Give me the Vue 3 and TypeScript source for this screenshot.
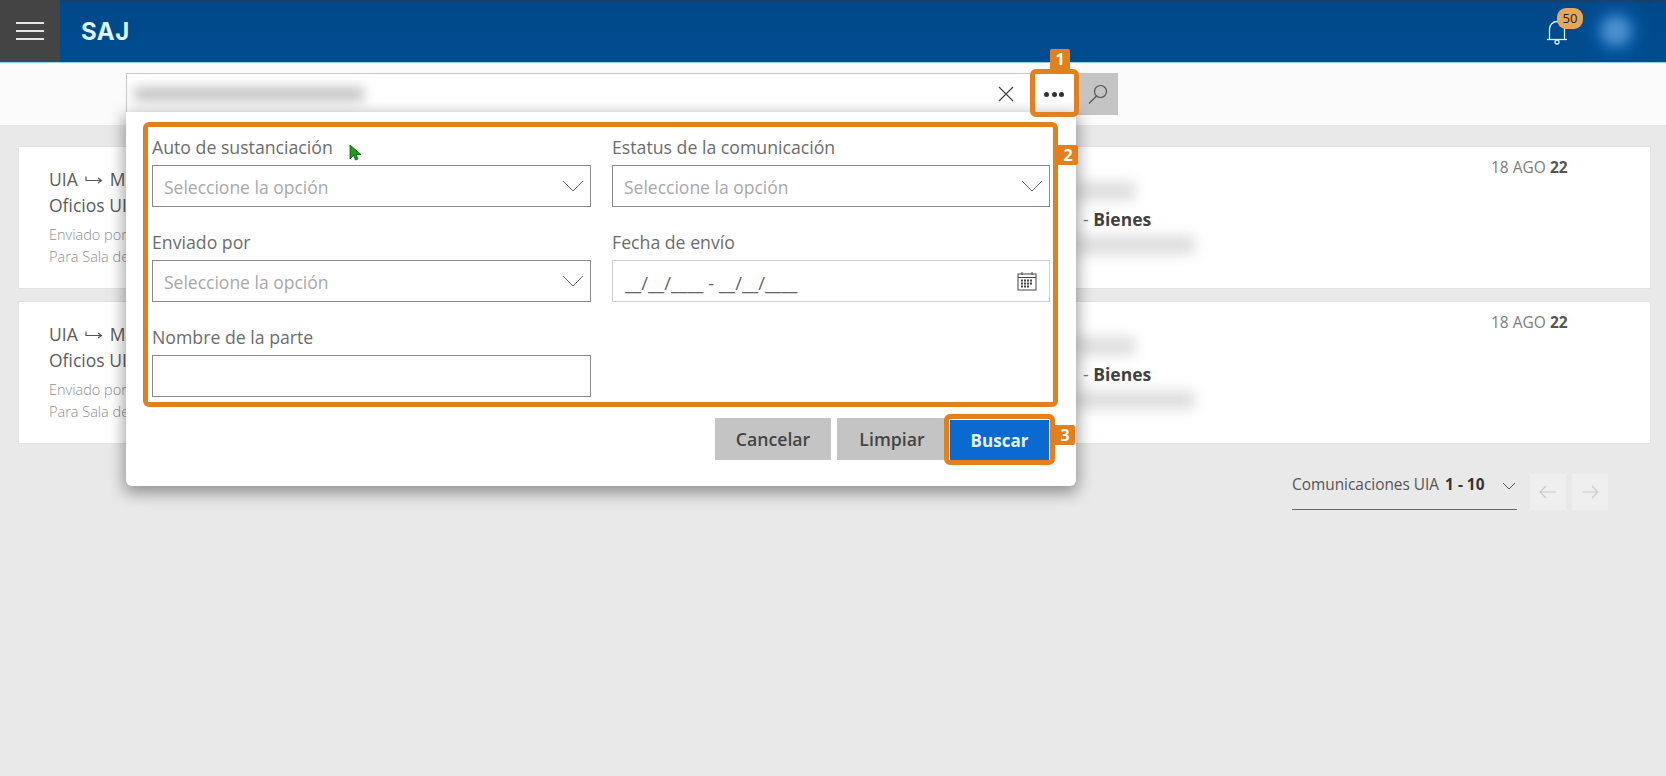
<script setup lang="ts">
interface Card { id: number }
const cards: Card[] = [{ id: 1 }, { id: 2 }]
</script>

<template>
  <div class="page">
    <header class="topbar">
      <button class="menu" aria-label="Menú"><span></span><span></span><span></span></button>
      <div class="logo">SAJ</div>
      <div class="top-right">
        <div class="bell">
          <svg width="22" height="26" viewBox="0 0 22 26" fill="none" stroke="#d8f0fb" stroke-width="1.3">
            <path d="M3.5 20.5V10a7.5 7.5 0 0 1 15 0v10.500" />
            <path d="M1 20.500h20" />
            <circle cx="11" cy="23" r="2" />
          </svg>
          <span class="badge">50</span>
        </div>
        <div class="avatar"></div>
      </div>
    </header>

    <div class="subbar">
      <div class="search">
        <div class="blur-text"></div>
        <svg class="clear" width="16" height="16" viewBox="0 0 16 16" stroke="#444" stroke-width="1.2"><path d="M1 1l14 14M15 1L1 15" /></svg>
      </div>
      <div class="more"><i></i><i></i><i></i></div>
      <div class="go">
        <svg width="22" height="22" viewBox="0 0 22 22" fill="none" stroke="#555" stroke-width="1.2">
          <circle cx="13.500" cy="8.500" r="6" />
          <path d="M9.500 13L2 20.500" />
        </svg>
      </div>
    </div>

    <main class="content">
      <article v-for="c in cards" :key="c.id" class="card">
        <div class="c-left">
          <div class="c-title">
            UIA
            <svg width="18" height="10" viewBox="0 0 18 10" fill="none" stroke="#555" stroke-width="1.200"><path d="M1 1.500V5.500h15M13 3l3.500 2.500L13 8" /></svg>
            Mesa
          </div>
          <div class="c-title">Oficios UIA</div>
          <div class="c-sub c-sub1">Enviado por</div>
          <div class="c-sub">Para Sala de</div>
        </div>
        <div class="c-mid">
          <div class="blob blob-a"></div>
          <div class="c-bienes"><span class="dash">-</span> <b>Bienes</b></div>
          <div class="blob blob-b"></div>
        </div>
        <div class="c-date">18 AGO <b>22</b></div>
      </article>

      <div class="pager">
        <div class="pager-select">
          <span>Comunicaciones UIA <b>1 - 10</b></span>
          <svg width="14" height="8" viewBox="0 0 14 8" fill="none" stroke="#555" stroke-width="1"><path d="M1 1l6 6 6-6" /></svg>
        </div>
        <div class="nav">
          <svg width="18" height="14" viewBox="0 0 18 14" fill="none" stroke="#c9c9c9" stroke-width="1.100"><path d="M17 7H1M7 1L1 7l6 6" /></svg>
        </div>
        <div class="nav">
          <svg width="18" height="14" viewBox="0 0 18 14" fill="none" stroke="#c9c9c9" stroke-width="1.100"><path d="M1 7h16M11 1l6 6-6 6" /></svg>
        </div>
      </div>
    </main>

    <section class="panel">
      <div class="form">
        <div class="field">
          <label>Auto de sustanciación</label>
          <div class="select">
            <span>Seleccione la opción</span>
            <svg width="22" height="12" viewBox="0 0 22 12" fill="none" stroke="#666" stroke-width="1"><path d="M1 1l10 10L21 1" /></svg>
          </div>
        </div>
        <div class="field">
          <label>Estatus de la comunicación</label>
          <div class="select">
            <span>Seleccione la opción</span>
            <svg width="22" height="12" viewBox="0 0 22 12" fill="none" stroke="#666" stroke-width="1"><path d="M1 1l10 10L21 1" /></svg>
          </div>
        </div>
        <div class="field">
          <label>Enviado por</label>
          <div class="select">
            <span>Seleccione la opción</span>
            <svg width="22" height="12" viewBox="0 0 22 12" fill="none" stroke="#666" stroke-width="1"><path d="M1 1l10 10L21 1" /></svg>
          </div>
        </div>
        <div class="field">
          <label>Fecha de envío</label>
          <div class="select date">
            <span>__/__/____ - __/__/____</span>
            <svg width="20" height="20" viewBox="0 0 20 20" fill="none" stroke="#444">
              <rect x="1" y="3" width="18" height="16" />
              <path d="M1 6.500h18M5 1v3M15 1v3" />
              <path d="M4 9.500h12M4 12.500h12M4 15.500h9" stroke-width="2" stroke-dasharray="2 1" />
            </svg>
          </div>
        </div>
        <div class="field">
          <label>Nombre de la parte</label>
          <div class="select"></div>
        </div>
      </div>
      <div class="actions">
        <button class="btn">Cancelar</button>
        <button class="btn limpiar">Limpiar</button>
        <button class="btn primary">Buscar</button>
      </div>
    </section>

    <!-- Anotaciones sobre la captura -->
    <div class="mark m1"></div>
    <div class="tag t1">1</div>
    <div class="mark m2"></div>
    <div class="tag t2">2</div>
    <div class="mark m3"></div>
    <div class="tag t3">3</div>

    <svg class="cursor" width="13" height="17" viewBox="0 0 13 17">
      <path d="M1 1v14l3.500-3.500 2 4.500 2.500-1-2-4.500h5z" fill="#1f9a1f" stroke="#0d5c0d" stroke-width="0.800" />
    </svg>
  </div>
</template>

<style>
html, body { margin: 0; }
</style>

<style scoped>
.page {
  position: relative;
  width: 1666px;
  height: 776px;
  overflow: hidden;
  background: #e9e9e9;
  font-family: "Open Sans", "Liberation Sans", sans-serif;
  color: #555;
}

.topbar {
  display: flex;
  align-items: stretch;
  height: 62px;
  box-sizing: content-box;
  overflow: hidden;
  background: linear-gradient(#1d3d63 0, #00498a 4px, #004c8f 100%);
  border-bottom: 1px solid #8fd0ea;
}
.menu {
  display: flex;
  flex-direction: column;
  justify-content: center;
  align-items: center;
  gap: 6px;
  width: 60px;
  padding: 0;
  border: 0;
  background: #444;
}
.menu span { display: block; width: 28px; height: 2px; background: #e4e4e4; }
.logo {
  margin-left: 21px;
  align-self: center;
  font-family: Inter, "Open Sans", sans-serif;
  font-weight: 700;
  font-size: 24px;
  letter-spacing: 0.5px;
  color: #dff3fb;
}
.top-right { display: flex; align-items: center; margin-left: auto; padding-right: 35px; }
.bell { position: relative; display: flex; margin-right: 33px; margin-top: 2px; }
.badge {
  position: absolute;
  left: 11px;
  top: -11px;
  width: 26px;
  height: 21px;
  border-radius: 9px;
  background: #e6a95c;
  color: #222;
  font-size: 13px;
  line-height: 21px;
  text-align: center;
}
.avatar {
  width: 30px;
  height: 30px;
  border-radius: 50%;
  background: #4a8fcf;
  box-shadow: 0 0 14px 8px #0a5fae;
  filter: blur(6px);
}

.subbar {
  display: flex;
  align-items: flex-start;
  height: 52px;
  padding: 10px 0 0 126px;
  background: #fbfbfb;
}
.search {
  display: flex;
  align-items: center;
  justify-content: space-between;
  box-sizing: border-box;
  width: 908px;
  height: 42px;
  padding: 0 20px 0 7px;
  background: #fff;
  border: 1px solid #c8c8c8;
  border-right: 0;
}
.blur-text {
  width: 230px;
  height: 14px;
  background: #c4c4c4;
  filter: blur(6px);
}
.more {
  display: flex;
  align-items: center;
  justify-content: center;
  gap: 2.500px;
  width: 40px;
  height: 42px;
  background: #fff;
}
.more i { width: 5px; height: 5px; border-radius: 50%; background: #333; }
.go {
  display: flex;
  align-items: center;
  justify-content: center;
  width: 44px;
  height: 42px;
  padding-left: 4px;
  box-sizing: border-box;
  background: #c4c4c4;
}

.content {
  display: flex;
  flex-direction: column;
  gap: 12px;
  padding: 21px 15px 0 18px;
}
.card {
  display: flex;
  box-sizing: border-box;
  height: 143px;
  background: #fff;
  border: 1px solid #e2e2e2;
}
.c-left { width: 1056px; padding: 20px 0 0 30px; box-sizing: border-box; }
.c-title { display: flex; align-items: center; gap: 7px; font-size: 17.500px; line-height: 25.500px; color: #5c5c5c; }
.c-sub { font-size: 14.500px; line-height: 22px; color: #8f8f8f; font-weight: 300; }
.c-sub1 { margin-top: 6px; }
.c-mid { width: 416px; padding-top: 35px; }
.blob { height: 18px; background: #dcdcdc; filter: blur(7px); }
.blob-a { width: 60px; }
.blob-b { width: 120px; }
.c-bienes { margin: 7px 0 5px 8px; font-size: 17.500px; line-height: 24px; color: #3f3f3f; }
.c-bienes b { font-weight: 700; }
.dash { color: #777; }
.c-date { padding-top: 9px; font-size: 15.500px; line-height: 22px; color: #7c7c7c; }
.c-date b { color: #555; font-weight: 700; }

.pager {
  display: flex;
  justify-content: flex-end;
  align-items: flex-start;
  margin-top: 18px;
  padding-right: 43px;
}
.pager-select {
  display: flex;
  justify-content: space-between;
  align-items: flex-start;
  box-sizing: border-box;
  width: 225px;
  height: 36px;
  margin-right: 13px;
  border-bottom: 1px solid #666;
  font-size: 15.400px;
  line-height: 22px;
  color: #555;
}
.pager-select b { margin-left: 2px; color: #333; }
.pager-select svg { margin: 8px 1px 0 0; }
.nav {
  display: flex;
  align-items: center;
  justify-content: center;
  width: 36px;
  height: 36px;
  margin-right: 6px;
  background: #efefef;
}
.nav:last-child { margin-right: 0; }

.panel {
  position: absolute;
  left: 126px;
  top: 112px;
  box-sizing: border-box;
  width: 950px;
  height: 374px;
  padding: 19px 26px 0;
  background: #fff;
  border-radius: 0 0 6px 6px;
  box-shadow: 0 5px 16px 2px rgba(0, 0, 0, 0.38);
}
.form {
  display: grid;
  grid-template-columns: 439px 438px;
  column-gap: 21px;
  row-gap: 19px;
  width: 898px;
}
.field label {
  display: block;
  height: 34px;
  font-size: 17.700px;
  line-height: 32px;
  color: #6c6c6c;
}
.select {
  display: flex;
  align-items: center;
  justify-content: space-between;
  box-sizing: border-box;
  height: 42px;
  padding: 0 6px 0 11px;
  border: 1px solid #8a8a8a;
  background: #fff;
  font-size: 17.500px;
  color: #a8a8a8;
}
.select span { padding-top: 2px; }
.date {
  padding: 0 12px 0 12px;
  border-color: #cfcfcf;
  font-size: 18.500px;
  color: #666;
}
.actions {
  display: flex;
  justify-content: flex-end;
  align-items: flex-end;
  gap: 6px;
  width: 897px;
  margin-top: 21px;
}
.btn {
  height: 42px;
  width: 116px;
  padding: 0;
  border: 0;
  background: #c4c4c4;
  font-family: inherit;
  font-size: 17.700px;
  font-weight: 600;
  color: #444;
}
.limpiar { width: 110px; }
.primary {
  width: 99px;
  height: 40px;
  margin-left: -3px;
  background: #0a6ad1;
  color: #e4f4ff;
  font-size: 17px;
  font-weight: 700;
}

.mark {
  position: absolute;
  box-sizing: border-box;
  border: 5px solid #e2801f;
  border-radius: 6px;
}
.m1 { left: 1030px; top: 69px; width: 49px; height: 48px; }
.m2 { left: 143px; top: 122px; width: 915px; height: 285px; }
.m3 { left: 944px; top: 414px; width: 111px; height: 51px; }
.tag {
  position: absolute;
  width: 20px;
  height: 20px;
  background: #e2801f;
  color: #fff;
  font-size: 16px;
  font-weight: 700;
  line-height: 20px;
  text-align: center;
}
.t1 { left: 1050px; top: 49px; border-radius: 2px 2px 0 0; }
.t2 { left: 1058px; top: 145px; border-radius: 0 2px 2px 0; }
.t3 { left: 1055px; top: 425px; border-radius: 0 2px 2px 0; }
.cursor { position: absolute; left: 349px; top: 144px; }
</style>
